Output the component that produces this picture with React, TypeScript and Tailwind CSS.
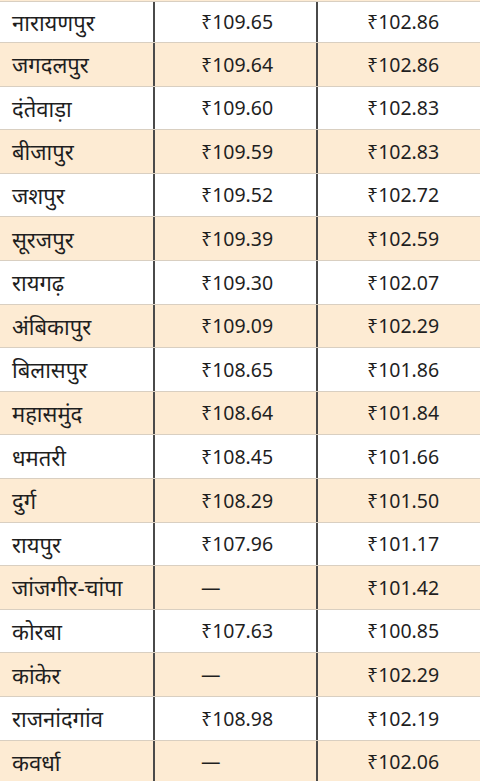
type Row = { city: string; petrol: string; diesel: string };

const rows: Row[] = [
  { city: "नारायणपुर", petrol: "₹109.65", diesel: "₹102.86" },
  { city: "जगदलपुर", petrol: "₹109.64", diesel: "₹102.86" },
  { city: "दंतेवाड़ा", petrol: "₹109.60", diesel: "₹102.83" },
  { city: "बीजापुर", petrol: "₹109.59", diesel: "₹102.83" },
  { city: "जशपुर", petrol: "₹109.52", diesel: "₹102.72" },
  { city: "सूरजपुर", petrol: "₹109.39", diesel: "₹102.59" },
  { city: "रायगढ़", petrol: "₹109.30", diesel: "₹102.07" },
  { city: "अंबिकापुर", petrol: "₹109.09", diesel: "₹102.29" },
  { city: "बिलासपुर", petrol: "₹108.65", diesel: "₹101.86" },
  { city: "महासमुंद", petrol: "₹108.64", diesel: "₹101.84" },
  { city: "धमतरी", petrol: "₹108.45", diesel: "₹101.66" },
  { city: "दुर्ग", petrol: "₹108.29", diesel: "₹101.50" },
  { city: "रायपुर", petrol: "₹107.96", diesel: "₹101.17" },
  { city: "जांजगीर-चांपा", petrol: "—", diesel: "₹101.42" },
  { city: "कोरबा", petrol: "₹107.63", diesel: "₹100.85" },
  { city: "कांकेर", petrol: "—", diesel: "₹102.29" },
  { city: "राजनांदगांव", petrol: "₹108.98", diesel: "₹102.19" },
  { city: "कवर्धा", petrol: "—", diesel: "₹102.06" },
];

export default function App() {
  return (
    <div className="w-[480px] h-[781px] overflow-hidden bg-[#fdebd3] font-['Noto_Sans','Liberation_Sans',sans-serif] text-[19.5px] text-[#1f1f1f]">
      <div className="h-[1px] bg-[#fdebd3]" />
      {rows.map((r, i) => (
        <div
          key={r.city}
          className={
            (i === 0 ? "h-[41px] " : "h-[43.6px] ") +
            (i % 2 === 0 ? "bg-white " : "bg-[#fdebd3] ") +
            "flex border-t border-[#d9cfc1]"
          }
        >
          <div className="w-[153px] flex items-center pl-[12px] text-[22px] leading-none">
            {r.city}
          </div>
          <div className="w-[165px] flex items-center pl-[46px] border-x-2 border-[#4a4a4a]">
            {r.petrol}
          </div>
          <div className="flex-1 flex items-center pl-[49px]">{r.diesel}</div>
        </div>
      ))}
    </div>
  );
}
